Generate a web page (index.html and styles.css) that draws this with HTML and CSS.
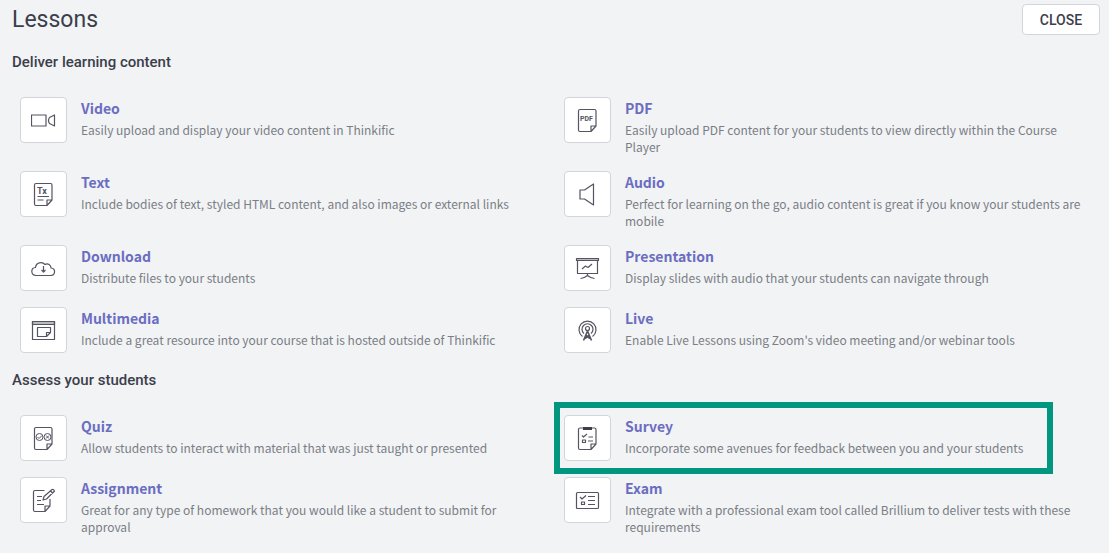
FILE: index.html
```
<!DOCTYPE html>
<html lang="en">
<head>
  <meta charset="UTF-8" />
  <title>Lessons</title>
  <meta name="viewport" content="width=device-width, initial-scale=1" />
  <link rel="stylesheet" href="styles.css">
</head>
<body>
  <header class="page-header">
    <h1>Lessons</h1>
    <button type="button" class="close-btn">CLOSE</button>
  </header>

  <main>
    <section>
      <h2>Deliver learning content</h2>
      <div class="lesson-grid">
        <div class="lesson">
          <div class="lesson-icon">
            <svg viewBox="0 0 25 25"><path d="M.5 7h14.500v11H.5zM23.500 7v11l-5-2.500q-2-3 0-6z"/></svg>
          </div>
          <div class="lesson-text">
            <a href="#video">Video</a>
            <p>Easily upload and display your video content in Thinkific</p>
          </div>
        </div>
        <div class="lesson">
          <div class="lesson-icon">
            <svg viewBox="0 0 25 25">
              <path d="M5 1.500h14.500q1.500 0 1.500 1.500v15l-5 5.500H5q-1.500 0-1.500-1.500V3q0-1.500 1.500-1.500zM16 23.500V18h5"/>
              <text x="5" y="13" class="pdf-label">PDF</text>
            </svg>
          </div>
          <div class="lesson-text">
            <a href="#pdf">PDF</a>
            <p>Easily upload PDF content for your students to view directly within the Course Player</p>
          </div>
        </div>
        <div class="lesson">
          <div class="lesson-icon">
            <svg viewBox="0 0 25 25">
              <path d="M5 1.500h14.500q1.500 0 1.500 1.500v15l-5 5.500H5q-1.500 0-1.500-1.500V3q0-1.500 1.500-1.500zM16 23.500V18h5M6.500 14.500H18M6.500 18h6"/>
              <text x="6" y="12" class="tx-label">Tx</text>
            </svg>
          </div>
          <div class="lesson-text">
            <a href="#text">Text</a>
            <p>Include bodies of text, styled HTML content, and also images or external links</p>
          </div>
        </div>
        <div class="lesson">
          <div class="lesson-icon">
            <svg viewBox="0 0 25 25"><path d="M5 8h4.500l9-6v21l-9-6H5z"/></svg>
          </div>
          <div class="lesson-text">
            <a href="#audio">Audio</a>
            <p>Perfect for learning on the go, audio content is great if you know your students are mobile</p>
          </div>
        </div>
        <div class="lesson">
          <div class="lesson-icon">
            <svg viewBox="0 0 25 25"><path d="M5 19.500C-.5 19-.5 12 4.500 11.500 5 6.500 11 5 14 8.500c3-1.500 6 .5 6 3.500 5 .5 4.500 7 0 7.500zM12.500 10v6M10.500 14l2 2 2-2"/></svg>
          </div>
          <div class="lesson-text">
            <a href="#download">Download</a>
            <p>Distribute files to your students</p>
          </div>
        </div>
        <div class="lesson">
          <div class="lesson-icon">
            <svg viewBox="0 0 25 25"><path class="shade" d="M1.500 2.500h22v2h-22z"/><path d="M2.500 4.500v13h20v-13M7 13l3.500-3 2.500 1.500L17 8M12.500 17.500V20M5.500 22.500q4-.5 7-3 3 2.500 7 3"/></svg>
          </div>
          <div class="lesson-text">
            <a href="#presentation">Presentation</a>
            <p>Display slides with audio that your students can navigate through</p>
          </div>
        </div>
        <div class="lesson">
          <div class="lesson-icon">
            <svg viewBox="0 0 25 25"><path class="shade" d="M1.500 3.500h22v3h-22z"/><path d="M1.500 3.500h22v18h-22zM6.500 9.500h13v5l-4 4h-9zM15.500 18.500v-4h4"/></svg>
          </div>
          <div class="lesson-text">
            <a href="#multimedia">Multimedia</a>
            <p>Include a great resource into your course that is hosted outside of Thinkific</p>
          </div>
        </div>
        <div class="lesson">
          <div class="lesson-icon">
            <svg viewBox="0 0 25 25"><circle cx="12.500" cy="10.500" r="2"/><path d="M7.500 18.500a8.500 8.500 0 1 1 10 0M9 15.500a5.500 5.500 0 1 1 7 0"/><path class="bold" d="M12.500 13l-4 9.500M12.500 13l4 9.500M10.500 17l4.500 3.500M14.500 17L10 20.500"/></svg>
          </div>
          <div class="lesson-text">
            <a href="#live">Live</a>
            <p>Enable Live Lessons using Zoom's video meeting and/or webinar tools</p>
          </div>
        </div>
      </div>
    </section>

    <section>
      <h2>Assess your students</h2>
      <div class="lesson-grid">
        <div class="lesson">
          <div class="lesson-icon">
            <svg viewBox="0 0 25 25">
              <path d="M5 1.500h14.500q1.500 0 1.500 1.500v15l-5 5.500H5q-1.500 0-1.500-1.500V3q0-1.500 1.500-1.500zM16 23.500V18h5"/>
              <g class="thin"><circle cx="8.500" cy="11" r="3.500"/><circle cx="16.500" cy="11" r="3.500"/><path d="M6.500 11l1.500 1.500L11 9.500M15 9.500l3 3M18 9.500l-3 3"/></g>
            </svg>
          </div>
          <div class="lesson-text">
            <a href="#quiz">Quiz</a>
            <p>Allow students to interact with material that was just taught or presented</p>
          </div>
        </div>
        <div class="lesson highlight">
          <div class="lesson-icon">
            <svg viewBox="0 0 25 25"><path d="M5 2h14.500q1.500 0 1.500 1.500V18l-5 5.500H5q-1.500 0-1.500-1.500V3.500Q3.500 2 5 2zM16 23.500V18h5M7 9.500L8.500 11 12 8M13.500 11H18M7.500 14h3v2.500h-3zM13 15h5"/><path class="solid" d="M8 1h9v3H8z"/></svg>
          </div>
          <div class="lesson-text">
            <a href="#survey">Survey</a>
            <p>Incorporate some avenues for feedback between you and your students</p>
          </div>
        </div>
        <div class="lesson">
          <div class="lesson-icon">
            <svg viewBox="0 0 25 25"><path d="M13.500 2.500H4Q2.500 2.500 2.500 4v18q0 1.500 1.500 1.500h10l5-5.500v-7M14 23.500V18h5M6 8.500h5M6 12.500h4M6 16.500h7M12 12l1-3.500 8-7q1.500-.5 2.500 1.500l-8 8zM19.500 3l2.500 2.500"/></svg>
          </div>
          <div class="lesson-text">
            <a href="#assignment">Assignment</a>
            <p>Great for any type of homework that you would like a student to submit for approval</p>
          </div>
        </div>
        <div class="lesson">
          <div class="lesson-icon">
            <svg viewBox="0 0 25 25"><path d="M2.500 4.500h20q1 0 1 1v14q0 1-1 1h-20q-1 0-1-1v-14q0-1 1-1zM5 9l2 2 4-3.500M6.500 14h3v2.500h-3zM13 8.500h7M13 12.500h7M13 16.500h7"/></svg>
          </div>
          <div class="lesson-text">
            <a href="#exam">Exam</a>
            <p>Integrate with a professional exam tool called Brillium to deliver tests with these requirements</p>
          </div>
        </div>
      </div>
    </section>
  </main>
</body>
</html>
```
FILE: styles.css
```
* { box-sizing: border-box; }
body {
  margin: 0;
  background: #f1f3f5;
  color: #3c3e4b;
  font-family: "Noto Sans CJK JP", "Noto Sans", sans-serif;
}
h1, h2, p { margin: 0; }
.page-header {
  display: flex;
  justify-content: space-between;
  align-items: flex-start;
  padding: 4px 9px 0 12px;
}
h1 {
  font-family: Roboto, sans-serif;
  font-size: 23px;
  line-height: 32px;
  font-weight: 400;
}
.close-btn {
  width: 78px;
  height: 31px;
  padding: 0;
  background: #fff;
  border: 1px solid #d3d5dc;
  border-radius: 4px;
  color: #3c3e4b;
  font: 500 14px Roboto, sans-serif;
  cursor: pointer;
}
h2 {
  padding: 14px 12px;
  font-family: Roboto, sans-serif;
  font-size: 15px;
  line-height: 24px;
  font-weight: 500;
}
.lesson-grid {
  display: grid;
  grid-template-columns: 1fr 1fr;
  row-gap: 16px;
  padding: 9px 11px 1px 10px;
}
.lesson {
  display: flex;
  gap: 14px;
  padding: 0 6px 0 10px;
}
.lesson-icon {
  flex: none;
  width: 47px;
  height: 46px;
  display: flex;
  align-items: center;
  justify-content: center;
  background: #fff;
  border: 1px solid #d3d5dc;
  border-radius: 4px;
}
.lesson-icon svg {
  width: 25px;
  height: 25px;
  fill: none;
  stroke: #555462;
  stroke-width: 1.2;
  stroke-linejoin: round;
}
.lesson-icon text {
  fill: #555462;
  stroke: none;
  font-family: Roboto, sans-serif;
  font-weight: 700;
}
.pdf-label { font-size: 7px; }
.tx-label { font-size: 9px; }
.lesson-icon .thin { stroke-width: 1; }
.lesson-icon .bold { stroke-width: 1.6; }
.lesson-icon .shade { fill: #b9b9c0; }
.lesson-icon .solid { fill: #3c3e4b; stroke: none; }
.lesson-text a {
  display: block;
  margin-bottom: 2px;
  color: #6b6dc1;
  font-size: 14px;
  line-height: 22px;
  font-weight: 700;
  text-decoration: none;
}
.lesson-text p {
  color: #7b7e85;
  font-size: 12px;
  line-height: 17px;
}

/* frame around the selected lesson type */
.highlight {
  position: relative;
  justify-self: start;
}
.highlight::after {
  content: "";
  position: absolute;
  inset: -13px -24px -13px 0;
  border: 6px solid #019680;
  pointer-events: none;
}
```
